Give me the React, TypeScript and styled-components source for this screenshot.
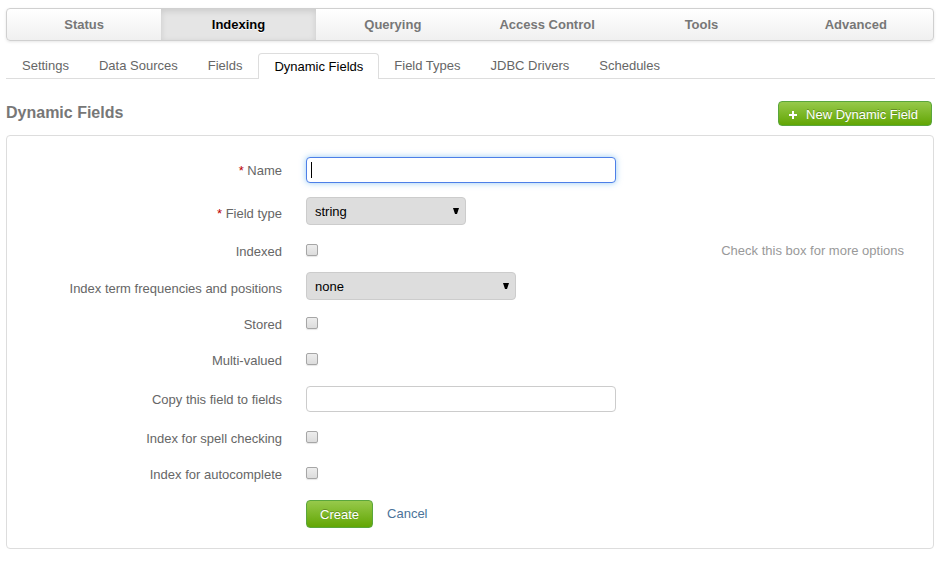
import React from "react";
import styled, { createGlobalStyle, css } from "styled-components";

const GlobalStyle = createGlobalStyle`
  *, *::before, *::after { box-sizing: border-box; }
  body {
    margin: 0;
    background: #fff;
    color: #666;
    font: 13px/18px "Liberation Sans", Arial, sans-serif;
  }
  button, input, select { margin: 0; font: inherit; }
`;

const Page = styled.div`
  padding: 8px 9px 27px 6px;
`;

const MainNav = styled.nav`
  display: flex;
  height: 33px;
  border: 1px solid #d0d0d0;
  border-radius: 4px;
  overflow: hidden;
  background: linear-gradient(#fff, #f0f0f0);
  box-shadow: 0 1px 3px rgba(0, 0, 0, 0.1);
`;

const MainTab = styled.a<{ $active?: boolean }>`
  flex: 1;
  padding: 7px 0;
  text-align: center;
  text-decoration: none;
  font-weight: 700;
  color: #777;
  ${(p) =>
    p.$active &&
    css`
      color: #000;
      background: #e5e5e5;
      box-shadow: inset 0 2px 6px rgba(0, 0, 0, 0.12);
      text-shadow: 0 1px 0 #fff;
    `}
`;

const SubNav = styled.nav`
  display: flex;
  height: 26px;
  margin-top: 12px;
  margin-right: -1px;
  padding-left: 1px;
  box-shadow: inset 0 -1px #ddd;
`;

const SubTab = styled.a<{ $active?: boolean }>`
  padding: 4px 15px;
  color: #666;
  text-decoration: none;
  ${(p) =>
    p.$active &&
    css`
      margin-left: 1px;
      color: #000;
      background: #fff;
      border: 1px solid #ddd;
      border-bottom: 0;
      border-radius: 4px 4px 0 0;
    `}
`;

const Heading = styled.header`
  display: flex;
  align-items: center;
  justify-content: space-between;
  margin-top: 22px;
  padding-right: 2px;
`;

const Title = styled.h1`
  margin: 0;
  font-size: 16px;
  line-height: 22px;
  padding-bottom: 2px;
  color: #777;
`;

const GreenButton = styled.button<{ $large?: boolean }>`
  display: flex;
  align-items: center;
  gap: 9px;
  height: ${(p) => (p.$large ? 28 : 25)}px;
  padding: 2px 13px 0 ${(p) => (p.$large ? 13 : 10)}px;
  border: 1px solid #5aa63c;
  border-radius: 4px;
  background: linear-gradient(#97c94b, #62a604);
  color: #fff;
  text-shadow: 0 -1px 0 rgba(0, 0, 0, 0.25);
`;

const Panel = styled.form`
  display: flex;
  flex-direction: column;
  margin-top: 9px;
  padding: 21px 29px 20px 0;
  border: 1px solid #ddd;
  border-radius: 4px;
`;

const Row = styled.div<{ $after?: number }>`
  display: grid;
  grid-template-columns: 275px 1fr auto;
  column-gap: 24px;
  align-items: center;
  min-height: 22px;
  margin-bottom: ${(p) => p.$after ?? 14}px;
  &:last-child { margin-bottom: 0; }
`;

const Label = styled.label<{ $drop?: number }>`
  padding-top: ${(p) => p.$drop ?? 2}px;
  text-align: right;
`;

const Required = styled.span`
  color: #b00;
`;

const TextInput = styled.input`
  width: 310px;
  height: 26px;
  padding: 0 5px;
  border: 1px solid #ccc;
  border-radius: 4px;
  background: #fff;
  color: #000;
  outline: none;
  &:focus {
    border-color: #4d7fe8;
    box-shadow: 0 0 6px rgba(82, 168, 236, 0.6);
  }
  &:focus:placeholder-shown {
    caret-color: transparent;
    background: linear-gradient(#000, #000) 4px center / 1px 16px no-repeat #fff;
  }
`;

const SelectBox = styled.div<{ $wide?: boolean }>`
  position: relative;
  width: ${(p) => (p.$wide ? 210 : 160)}px;
  height: 28px;
`;

const Select = styled.select`
  appearance: none;
  width: 100%;
  height: 28px;
  padding: 2px 24px 0 8px;
  border: 1px solid #ccc;
  border-radius: 4px;
  background: #ddd;
  color: #000;
`;

const Arrow = styled.svg`
  position: absolute;
  right: 7px;
  top: 11px;
  pointer-events: none;
`;

const Checkbox = styled.input`
  appearance: none;
  display: block;
  width: 12px;
  height: 12px;
  border: 1px solid #a6a6a6;
  border-radius: 2px;
  background: linear-gradient(#ededed, #dcdcdc);
  box-shadow: 0 1px 1px rgba(0, 0, 0, 0.1);
  &:checked { background: #777; }
`;

const Hint = styled.span`
  padding-top: 2px;
  color: #999;
`;

const Actions = styled.div`
  grid-column: 2;
  display: flex;
  align-items: center;
  gap: 14px;
`;

const Cancel = styled.a`
  color: #4b7399;
  text-decoration: none;
`;

const MAIN_TABS = ["Status", "Indexing", "Querying", "Access Control", "Tools", "Advanced"];
const SUB_TABS = ["Settings", "Data Sources", "Fields", "Dynamic Fields", "Field Types", "JDBC Drivers", "Schedules"];

function CheckRow({ id, label, hint, after }: { id: string; label: string; hint?: string; after?: number }) {
  return (
    <Row $after={after}>
      <Label htmlFor={id} $drop={4}>{label}</Label>
      <Checkbox id={id} type="checkbox" />
      {hint && <Hint>{hint}</Hint>}
    </Row>
  );
}

function DropDown({ id, value, wide }: { id: string; value: string; wide?: boolean }) {
  return (
    <SelectBox $wide={wide}>
      <Select id={id} defaultValue={value}>
        <option>{value}</option>
      </Select>
      <Arrow width="6" height="6" viewBox="0 0 6 6" aria-hidden="true">
        <path d="M0 0H6L4 6H2Z" />
      </Arrow>
    </SelectBox>
  );
}

export default function App() {
  return (
    <Page>
      <GlobalStyle />
      <MainNav>
        {MAIN_TABS.map((t) => (
          <MainTab key={t} href="#" $active={t === "Indexing"}>{t}</MainTab>
        ))}
      </MainNav>
      <SubNav>
        {SUB_TABS.map((t) => (
          <SubTab key={t} href="#" $active={t === "Dynamic Fields"}>{t}</SubTab>
        ))}
      </SubNav>
      <Heading>
        <Title>Dynamic Fields</Title>
        <GreenButton type="button">
          <svg width="8" height="8" viewBox="0 0 8 8" aria-hidden="true">
            <path d="M4 0V8M0 4H8" stroke="#fff" strokeWidth="2" />
          </svg>
          New Dynamic Field
        </GreenButton>
      </Heading>
      <Panel onSubmit={(e) => e.preventDefault()}>
        <Row>
          <Label htmlFor="name"><Required>*</Required> Name</Label>
          <TextInput id="name" type="text" placeholder=" " autoFocus />
        </Row>
        <Row>
          <Label htmlFor="type" $drop={6}><Required>*</Required> Field type</Label>
          <DropDown id="type" value="string" />
        </Row>
        <CheckRow id="indexed" label="Indexed" hint="Check this box for more options" after={11} />
        <Row $after={12}>
          <Label htmlFor="terms" $drop={6}>Index term frequencies and positions</Label>
          <DropDown id="terms" value="none" wide />
        </Row>
        <CheckRow id="stored" label="Stored" />
        <CheckRow id="multi" label="Multi-valued" after={16} />
        <Row>
          <Label htmlFor="copy">Copy this field to fields</Label>
          <TextInput id="copy" type="text" />
        </Row>
        <CheckRow id="spell" label="Index for spell checking" />
        <CheckRow id="auto" label="Index for autocomplete" after={16} />
        <Row>
          <Actions>
            <GreenButton type="submit" $large>Create</GreenButton>
            <Cancel href="#">Cancel</Cancel>
          </Actions>
        </Row>
      </Panel>
    </Page>
  );
}
